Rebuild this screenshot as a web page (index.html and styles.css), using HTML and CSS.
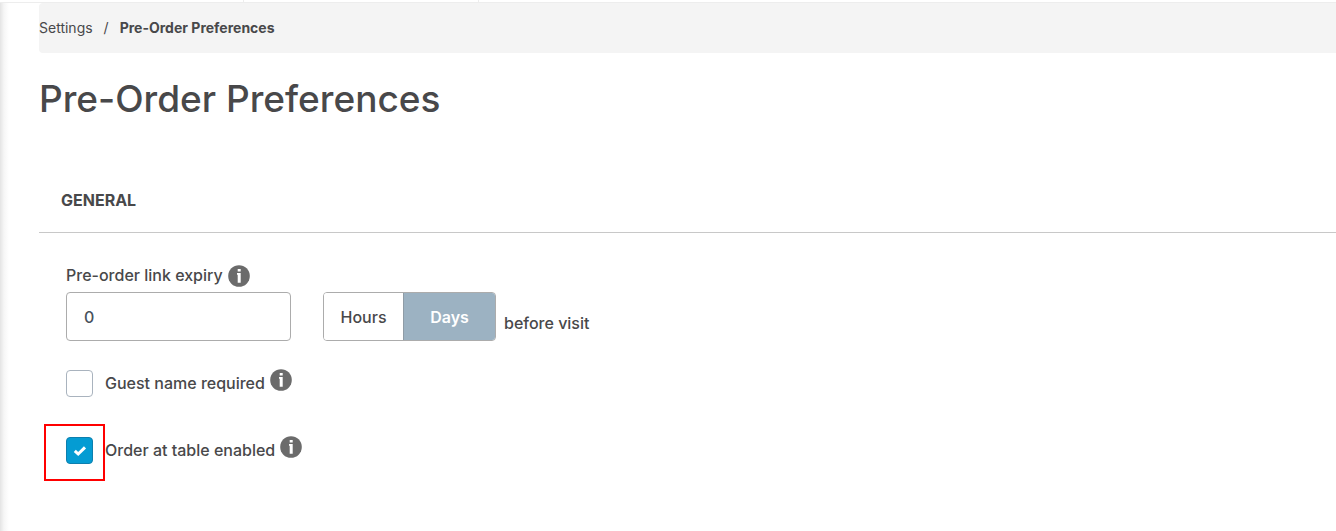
FILE: index.html
```
<!DOCTYPE html>
<html lang="en">
<head>
    <meta charset="UTF-8">
    <meta name="viewport" content="width=device-width, initial-scale=1.0">
    <title>Pre-Order Preferences</title>
    <link rel="stylesheet" href="styles.css">
</head>
<body>
    <!-- Bottom edge of the tab strip -->
    <div class="tab-strip">
        <div class="tab"></div>
        <div class="tab"></div>
    </div>

    <main class="page">
        <nav class="breadcrumb" aria-label="Breadcrumb">
            <a href="#">Settings</a>
            <span class="separator">/</span>
            <strong>Pre-Order Preferences</strong>
        </nav>

        <h1>Pre-Order Preferences</h1>

        <h2>General</h2>

        <form class="settings">
            <div class="expiry-label">
                <label for="expiry">Pre-order link expiry</label>
                <svg class="info" viewBox="0 0 22 22" aria-hidden="true">
                    <circle cx="11" cy="11" r="10.8"/>
                    <path d="M9.7 3.9h3v2.7h-3zM9 8h3.7v9.8H9.7V9.8H9z"/>
                </svg>
            </div>
            <div class="expiry-row">
                <input type="text" id="expiry" class="expiry-input" value="0">
                <div class="toggle">
                    <button type="button">Hours</button>
                    <button type="button" class="active">Days</button>
                </div>
                <span class="suffix">before visit</span>
            </div>

            <div class="check-row">
                <span class="check">
                    <input type="checkbox" id="guestName">
                </span>
                <label for="guestName">Guest name required</label>
                <svg class="info" viewBox="0 0 22 22" aria-hidden="true">
                    <circle cx="11" cy="11" r="10.8"/>
                    <path d="M9.7 3.9h3v2.7h-3zM9 8h3.7v9.8H9.7V9.8H9z"/>
                </svg>
            </div>

            <div class="check-row">
                <span class="check highlighted">
                    <input type="checkbox" id="orderAtTable" checked>
                    <svg class="tick" viewBox="0 0 14 12" aria-hidden="true">
                        <path d="M1.8 5.8 5.2 9 12 2.4"/>
                    </svg>
                </span>
                <label for="orderAtTable">Order at table enabled</label>
                <svg class="info" viewBox="0 0 22 22" aria-hidden="true">
                    <circle cx="11" cy="11" r="10.8"/>
                    <path d="M9.7 3.9h3v2.7h-3zM9 8h3.7v9.8H9.7V9.8H9z"/>
                </svg>
            </div>
        </form>
    </main>
</body>
</html>
```

FILE: styles.css
```
*,
*::after {
    margin: 0;
    padding: 0;
    box-sizing: border-box;
}

body {
    min-height: 100vh;
    display: flex;
    flex-direction: column;
    background: #fff;
    color: #48484a;
    font-family: Inter, Arial, sans-serif;
    font-size: 16px;
    font-weight: 500;
    line-height: 24px;
}

/* Tab strip */
.tab-strip {
    display: flex;
    height: 3px;
    padding-left: 9px;
    border-bottom: 1px solid #ededed;
}

.tab {
    width: 235px;
    border-right: 1px solid #ededed;
}

/* Page with the shadow of the side menu on its left */
.page {
    flex: 1;
    padding-left: 39px;
    background: linear-gradient(to right, #e4e4e4, #f6f6f6 4px, #fff 9px);
}

.breadcrumb {
    display: flex;
    gap: 11px;
    height: 50px;
    padding-top: 13px;
    background: #f4f4f4;
    border-radius: 4px 0 0 4px;
    font-size: 14px;
    font-weight: 400;
}

.breadcrumb a {
    color: inherit;
    text-decoration: none;
}

.breadcrumb strong {
    font-weight: 700;
}

h1 {
    margin-top: 22px;
    font-size: 37px;
    font-weight: 500;
    line-height: 48px;
}

h2 {
    margin-top: 54px;
    padding: 11px 22px 20px;
    border-bottom: 1px solid #c8c8c8;
    font-size: 16px;
    font-weight: 700;
    line-height: 24px;
    text-transform: uppercase;
}

/* Settings form */
.settings {
    padding: 29px 27px;
}

.expiry-label {
    display: flex;
    align-items: center;
    gap: 5px;
    height: 28px;
    margin-bottom: 2px;
}

.expiry-label label,
.check-row label {
    padding-bottom: 2px;
}

.info {
    flex: none;
    width: 22px;
    height: 22px;
    fill: #6b6b6b;
}

.info path {
    fill: #fff;
}

.expiry-row {
    display: flex;
    align-items: center;
}

.expiry-input {
    width: 225px;
    height: 49px;
    padding: 0 17px;
    border: 1px solid #acacac;
    border-radius: 4px;
    background: #fff;
    color: #48525c;
    font: inherit;
}

.toggle {
    display: flex;
    height: 49px;
    margin-left: 32px;
    border: 1px solid #acacac;
    border-radius: 4px;
    overflow: hidden;
}

.toggle button {
    width: 79px;
    border: none;
    background: #fff;
    color: inherit;
    font: inherit;
    cursor: pointer;
}

.toggle .active {
    width: 92px;
    border-left: 1px solid #8f9ca6;
    background: #9cb2c2;
    color: #fff;
    font-weight: 600;
}

.suffix {
    padding: 13px 0 0 8px;
}

.check-row {
    display: flex;
    align-items: center;
    height: 27px;
    margin-top: 40px;
}

.expiry-row + .check-row {
    margin-top: 29px;
}

.check {
    position: relative;
    width: 27px;
    height: 27px;
    margin-right: 12px;
}

.check input {
    display: block;
    width: 27px;
    height: 27px;
    appearance: none;
    border: 1px solid #a9b3be;
    border-radius: 4px;
    background: #fff;
}

.check input:checked {
    border-color: #0d7fae;
    background: #049cd3;
}

.tick {
    position: absolute;
    top: 8px;
    left: 7px;
    width: 14px;
    height: 12px;
    fill: none;
    stroke: #fff;
    stroke-width: 3;
    pointer-events: none;
}

/* Red frame round the option */
.highlighted::after {
    content: "";
    position: absolute;
    top: -13px;
    left: -22px;
    width: 61px;
    height: 57px;
    border: 2px solid #f00;
    pointer-events: none;
}

.check-row .info {
    margin: 0 0 8px 5px;
}
```
